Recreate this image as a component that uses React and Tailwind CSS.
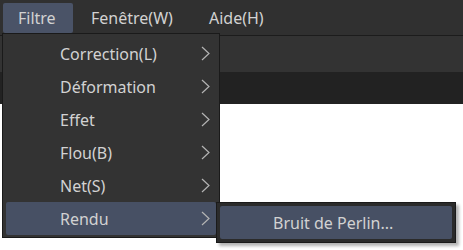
import React from "react";

const items = ["Correction(L)", "Déformation", "Effet", "Flou(B)", "Net(S)", "Rendu"];

function Chevron() {
  return (
    <svg width="9" height="15" viewBox="0 0 9 15" className="shrink-0">
      <path d="M1 1 L8 7.5 L1 14" fill="none" stroke="#b4b4b4" strokeWidth="1.2" />
    </svg>
  );
}

export default function App() {
  return (
    <div className="relative w-[463px] h-[250px] overflow-hidden bg-white text-[16px] text-[#d2d2d2] font-['Noto_Sans','Open_Sans',sans-serif]">
      {/* Menu bar */}
      <div className="flex h-[36px] items-center bg-[#303030] border-b border-[#1c1c1c]">
        <div className="ml-[3px] w-[70px] h-[30px] flex items-center pl-[15px] rounded-[2px] bg-[#4a5367]">
          Filtre
        </div>
        <div className="w-[118px] pl-[18px]">Fenêtre(W)</div>
        <div className="pl-[18px]">Aide(H)</div>
      </div>
      {/* Toolbar */}
      <div className="h-[36px] bg-[#333333]" />
      <div className="h-[32px] bg-[#222222]" />

      {/* Filtre dropdown */}
      <div className="absolute left-[2px] top-[33px] w-[218px] border border-[#1a1a1a] bg-[#333333] pt-[3px] pb-[2px] px-[3px]">
        {items.map((label) => (
          <div
            key={label}
            className={
              "h-[33px] flex items-center justify-between pl-[54px] pr-[6px] rounded-[2px] " +
              (label === "Rendu" ? "bg-[#475064]" : "")
            }
          >
            <span>{label}</span>
            <Chevron />
          </div>
        ))}
      </div>

      {/* Rendu submenu */}
      <div className="absolute left-[216px] top-[202px] w-[240px] h-[41px] border border-[#1a1a1a] bg-[#2b2b2b] p-[3px] shadow-[3px_3px_3px_rgba(0,0,0,0.3)]">
        <div className="h-[33px] flex items-center pl-[53px] rounded-[2px] bg-[#475064]">
          Bruit de Perlin...
        </div>
      </div>
    </div>
  );
}
